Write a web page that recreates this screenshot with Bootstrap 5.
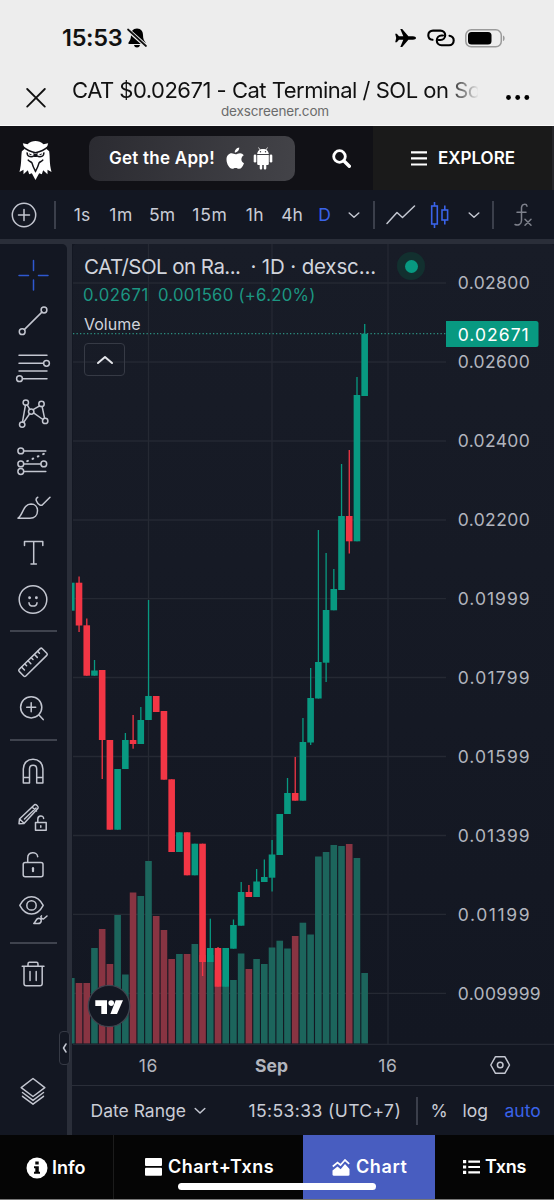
<!DOCTYPE html>
<html lang="en">
<head>
<meta charset="utf-8">
<meta name="viewport" content="width=device-width, initial-scale=1">
<title>CAT/SOL chart</title>
<link href="https://cdn.jsdelivr.net/npm/bootstrap@5.3.0/dist/css/bootstrap.min.css" rel="stylesheet">
<style>
body{font-family:Inter,"Liberation Sans",sans-serif;background:#131722;color:#c9ccd6;width:554px;height:1200px;overflow:hidden;line-height:1}
svg{display:block;flex:none}
.ln{fill:none;stroke:#c3c6d0;stroke-width:1.5;stroke-linecap:round;stroke-linejoin:round}
.t{white-space:nowrap;flex:none}
.browser{background:#ededed;color:#111;height:126px;border-bottom:1px solid #fafafa}
.status{height:76px;padding-left:62px}
.clock{font-size:23.5px;font-weight:600;letter-spacing:-.3px;width:64px}
.page-title{font-size:22px;letter-spacing:-.5px;width:406px;line-height:28px;-webkit-mask-image:linear-gradient(90deg,#000 376px,transparent 407px);mask-image:linear-gradient(90deg,#000 376px,transparent 407px)}
.host{font-size:13.5px;color:#6b6b6b;line-height:14px;letter-spacing:-.15px}
.top{height:64px;background:#111116;color:#fff}
.app-btn{width:206px;height:45px;border-radius:10px;background:linear-gradient(100deg,#2b2b31,#434348);font-weight:600;font-size:17px;letter-spacing:.25px;padding-left:20px;margin-left:37px}
.explore{background:#1a1a1a;width:181px;height:64px;font-weight:600;font-size:17px;padding-left:38px;border-right:2px solid #26262a}
.tools{height:49px;font-size:17.5px}
.tools>*{display:flex;justify-content:center;align-items:center;flex:none}
.sep{width:2px;height:28px;background:#3b3f4b}
.blue{color:#3a63e8}
.work{height:896px;background:#2a2e39;padding-top:5px}
.side{width:67px;background:#131722;border-top-right-radius:5px;padding:8px 1px 0 0}
.rule{width:47px;height:2px;background:#3f434e;margin:7px 0 7px}
.rule.low{margin:8.5px 0 6.5px}
.main{width:482px;margin-left:5px;background:#131722}
.legend{position:absolute;left:12px;top:9px}
.l1{font-size:20.5px;height:28px;line-height:28px;color:#d1d4dc}
.l2{font-size:16.7px;height:28px;line-height:28px;color:#1c9682;margin-left:-1px}
.l3{font-size:16px;height:30px;line-height:30px;color:#d1d4dc}
.fold{width:41px;height:33px;border:1.5px solid #363a45;border-radius:4px;margin-top:4px}
.live{position:absolute;left:325px;top:8px;width:28px;height:28px;border-radius:50%;background:#12302f}
.live i{width:13px;height:13px;border-radius:50%;background:#089981}
.handle{position:absolute;left:59px;top:1031px;width:11px;height:34px;border:1px solid #363a45;border-radius:4px;background:#131722}
.range{height:50px;border-top:1px solid #2a2e39;font-size:17.5px;padding-left:19px}
.tabs{height:65px;background:#050505;color:#fff;font-weight:600;font-size:18px;border-bottom:1.5px solid #777}
.tabs>div{height:100%}
.on{background:#485dc0}
.home{position:absolute;left:178px;top:1183px;width:198px;height:7px;border-radius:4px;background:#fff}
</style>
</head>
<body class="position-relative m-0">
<header class="browser">
  <div class="status d-flex align-items-center">
    <span class="clock t">15:53</span>
    <svg width="22" height="22" viewBox="0 0 22 22"><path d="M11 1.500c4.200 0 6 3 6 6.500 0 4 1 5.500 2.500 7.500v1.500H2.500V15.500C4 13.500 5 12 5 8c0-3.500 1.800-6.500 6-6.500zM8 18h6c-.3 1.700-1.500 2.500-3 2.500S8.300 19.700 8 18z"/><path d="M2 3l18 16" stroke="#ededed" stroke-width="4"/><path d="M2 2.500l18 16.500" stroke="#111" stroke-width="1.700" stroke-linecap="round"/></svg>
    <svg class="ms-auto" width="23" height="20" viewBox="0 0 23 20"><path d="M22 10c0 1-1.500 1.700-3 1.700h-4.600L8.200 19H6.300l3-7.300H5L2.800 14.300H1.200L2.200 10l-1-4.300h1.600L5 8.300h4.300L6.300 1h1.900l6.200 7.300H19c1.500 0 3 .7 3 1.700z"/></svg>
    <svg style="margin-left:10px" width="28" height="18" viewBox="0 0 28 18" fill="none" stroke="#000" stroke-width="2.100" stroke-linecap="round"><path d="M5.500 10.800C3 10.500 1.300 8.600 1.300 6.200 1.300 3.400 3.300 1.600 6 1.600h7.500c2.800 0 4.700 2 4.700 4.600s-2 4.800-4.700 4.800h-2"/><path d="M22.500 6.800c2.600.5 4.200 2.300 4.200 4.700 0 2.800-2 4.700-4.700 4.700h-7.500c-2.800 0-4.700-2-4.700-4.700S11.800 6.500 14.500 6.500H16"/></svg>
    <svg style="margin:0 48px 0 10px" width="41" height="19" viewBox="0 0 41 19"><rect x=".8" y=".8" width="35.500" height="17" rx="5.500" fill="none" stroke="#9b9b9b" stroke-width="1.500"/><rect x="3" y="3" width="23.500" height="12.600" rx="3.500"/><path d="M38 6.500c2.200.8 2.200 4.800 0 5.600z" fill="#9b9b9b"/></svg>
  </div>
  <div class="d-flex">
    <svg style="margin:12px 0 0 26px" width="20" height="20" viewBox="0 0 20 20"><path d="M1.200 1l17.600 17.600M18.800 1L1.200 18.600" stroke="#111" stroke-width="1.800" stroke-linecap="round"/></svg>
    <div style="margin-left:26px">
      <div class="page-title t">CAT $0.02671 - Cat Terminal / SOL on So</div>
      <div class="host text-center">dexscreener.com</div>
    </div>
    <svg style="margin:18px 0 0 27px" width="26" height="8"><circle cx="3.500" cy="3.500" r="2.400"/><circle cx="12.700" cy="3.500" r="2.400"/><circle cx="21.800" cy="3.500" r="2.400"/></svg>
  </div>
</header>

<nav class="top d-flex align-items-center">
  <svg style="margin:5px 0 0 19px" width="33" height="39" viewBox="0 0 96 117"><path fill="#fff" d="M10 7l14 3C38-3 58-3 72 10l14-3-5 17 8 7c3 20 0 34 7 62l-12-7v14L71 88l-4 12-8-3-11 20-11-20-8 3-4-12-13 12V86L0 93c7-28 4-42 7-62l8-7z"/><path fill="none" stroke="#111116" stroke-width="4.500" d="M10 17c12 11 26 16 38 18 12-2 26-7 38-18M23 34c-1 12 10 17 22 10M73 34c1 12-10 17-22 10M25 56c4 6 9 6 12 9 2 7 5 16 11 26 6-10 9-19 11-26 3-3 8-3 12-9"/><path fill="#111116" d="M41 36l7 3 7-3-3 12h-8zM29 37l9 5-7 1zM67 37l-9 5 7 1z"/></svg>
  <div class="app-btn d-flex align-items-center">
    <span class="t" style="width:117px">Get the App!</span>
    <svg width="19" height="23" viewBox="0 0 19 23" fill="#fff"><path d="M13.200.5c.2 2.400-1.800 5-4.400 5C8.500 3.200 10.800.8 13.200.5zM18 16.200c-1.200 3-2.700 5.600-4.900 5.600-1.300 0-1.900-.8-3.500-.8s-2.200.8-3.400.8C3.500 21.800.5 17 .5 12.500.5 8.600 3 6.300 5.600 6.300c1.600 0 2.700 1 4 1 1.200 0 2.500-1.100 4.500-1.100 1.400 0 2.800.7 3.700 2-3.500 2-2.900 6.700.2 8z"/></svg>
    <svg style="margin-left:8px" width="20" height="23" viewBox="0 0 20 23" fill="#fff"><path d="M4.200 7C4.400 3.800 6.800 1.900 10 1.900S15.600 3.800 15.800 7zM4.200 8h11.600v8.800c0 .8-.6 1.200-1.300 1.200h-1.200v3.200c0 1.800-2.500 1.800-2.500 0V18H9.200v3.200c0 1.800-2.500 1.800-2.500 0V18H5.500c-.7 0-1.300-.4-1.300-1.200z"/><rect x=".7" y="7.500" width="2.600" height="8" rx="1.300"/><rect x="16.700" y="7.500" width="2.600" height="8" rx="1.300"/><path d="M5.500.5l1.800 2.800M14.500.5l-1.800 2.800" stroke="#fff" stroke-width=".8"/><circle cx="7.500" cy="4.800" r=".7" fill="#37373c"/><circle cx="12.500" cy="4.800" r=".7" fill="#37373c"/></svg>
  </div>
  <svg style="margin-left:37px" width="19" height="19" viewBox="0 0 19 19" fill="none" stroke="#fff"><circle cx="7.500" cy="7.500" r="5.800" stroke-width="2.800"/><path d="M12 12l5.300 5.300" stroke-width="3.400" stroke-linecap="round"/></svg>
  <div class="explore ms-auto d-flex align-items-center">
    <svg width="16" height="15" viewBox="0 0 16 15"><path d="M0 1.300h16M0 7.400h16M0 13.500h16" stroke="#fff" stroke-width="2.200"/></svg>
    <span class="t" style="margin-left:11px">EXPLORE</span>
  </div>
</nav>

<div class="tools d-flex align-items-center">
  <div style="width:48px"><svg width="26" height="26" viewBox="-13 -13 26 26" class="ln"><circle r="11.700"/><path d="M-5.500 0h11M0-5.500v11"/></svg></div>
  <div style="width:14px"><i class="sep"></i></div>
  <div class="t" style="width:40px"><span>1s</span></div>
  <div class="t" style="width:38px;letter-spacing:.5px"><span>1m</span></div>
  <div class="t" style="width:44px"><span>5m</span></div>
  <div class="t" style="width:52px;letter-spacing:.8px"><span>15m</span></div>
  <div class="t" style="width:38px;letter-spacing:.6px"><span>1h</span></div>
  <div class="t" style="width:36px"><span>4h</span></div>
  <div class="t blue" style="width:29px"><span>D</span></div>
  <div style="width:30px"><svg width="12" height="8" viewBox="0 0 12 8" class="ln"><path d="M1.200 2L6 6.200 10.800 2"/></svg></div>
  <div style="width:9px"><i class="sep"></i></div>
  <div style="width:46px"><svg width="30" height="20" viewBox="0 0 30 20" class="ln"><path d="M1 18.500l10-11 5.500 5L28.500 1"/></svg></div>
  <div style="width:32px"><svg width="20" height="26" viewBox="0 0 20 26" fill="none" stroke="#3a63e8" stroke-width="1.600"><path d="M4.500 0v4M4.500 22v4M14.800 3.500V8M14.800 18v4.500"/><rect x="1.700" y="4" width="5.600" height="18"/><rect x="12" y="8" width="5.600" height="10"/></svg></div>
  <div style="width:36px"><svg width="12" height="8" viewBox="0 0 12 8" class="ln"><path d="M1.200 2L6 6.200 10.800 2"/></svg></div>
  <div style="width:2px"><i class="sep"></i></div>
  <div style="width:57px"><svg width="20" height="24" viewBox="0 0 20 24" class="ln" style="stroke:#7d808b"><path d="M14 3.200C13.500.6 9 .5 8.500 4.500v13c0 4-3.500 5.300-6.500 4M4 9.200h9M12 16.200l6 6M18 16.200l-6 6"/></svg></div>
</div>

<div class="work d-flex">
  <aside class="side d-flex flex-column align-items-center">
    <svg width="46" height="46.400" viewBox="-23 -23 46 46.400" class="ln" style="stroke:#2f58d0"><path d="M.5-14.500v10M.5 5v10M-14 .5h9.500M5.500 .5H15"/></svg>
    <svg width="46" height="46.400" viewBox="-23 -23 46 46.400" class="ln"><circle cx="-10.800" cy="10.700" r="2.900"/><circle cx="11" cy="-11" r="2.900"/><path d="M-8.700 8.600L8.900-8.900"/></svg>
    <svg width="46" height="46.400" viewBox="-23 -23 46 46.400" class="ln"><path d="M-14-12.700h28M-14-4.700h24.500M-14 3h28M-10.500 10.700H14"/><circle cx="13.500" cy="-4.700" r="2.900"/><circle cx="-13.500" cy="10.700" r="2.900"/></svg>
    <svg width="46" height="46.400" viewBox="-23 -23 46 46.400" class="ln"><circle cx="-7.200" cy="-11.400" r="2.700"/><circle cx="8.500" cy="-10.100" r="2.700"/><circle cx="-1.800" cy="-2.400" r="2.700"/><circle cx="-10.800" cy="10.600" r="2.700"/><circle cx="12.200" cy="6.900" r="2.700"/><path d="M-7.600-8.700l-2.900 16.600M-5.800-9.100l2.600 4.400M-3.400-.2l-5.900 8.600M.1-4.300l6.500-3.900M9.100-7.500l2.500 11.800M.6-1.200l9.300 6.700"/></svg>
    <svg width="46" height="46.400" viewBox="-23 -23 46 46.400" class="ln"><circle cx="-12.200" cy="-10.100" r="2.900"/><circle cx="-12.200" cy="2.900" r="2.900"/><circle cx="10.800" cy="2.900" r="2.900"/><circle cx="-12.200" cy="10.500" r="2.900"/><path d="M-9-10.100h21.800M-9 2.900H7.700M-9 10.500h21.800"/><path d="M-5.800.2L11-7.200" stroke-dasharray=".8 5" stroke-width="2"/></svg>
    <svg width="46" height="46.400" viewBox="-23 -23 46 46.400" class="ln"><path d="M-15 11.200c5-3 5-14 13-14.200 4 0 6.500 3 6.500 6.800 0 4.500-3 7.400-7.500 7.400zM4.800-9.800C1.500-8.500 3.500-4 7-1.800h2L17-9.800"/></svg>
    <svg width="46" height="46.400" viewBox="-23 -23 46 46.400" class="ln"><path d="M-8.500-7.500v-4H9.800v4M.7-11.500v22.500M-2 11h5.400"/></svg>
    <svg width="46" height="46.400" viewBox="-23 -23 46 46.400" class="ln"><circle cy="-.5" r="13.800"/><path d="M-4 2.800c.5 4.400 7.500 4.400 8 0"/><circle cx="-3.400" cy="-2.200" r=".7"/><circle cx="3.400" cy="-2.200" r=".7"/></svg>
    <div class="rule"></div>
    <svg width="46" height="46.400" viewBox="-23 -23 46 46.400" class="ln"><g transform="translate(0 .3) rotate(-44.500)"><rect x="-16.200" y="-4.700" width="32.400" height="9.400" rx="1.500"/><path d="M-11.500-4.500V-.5M-7-4.500v2.500M-2.500-4.500V-.5M2-4.500v2.500M6.500-4.500V-.5M11-4.500v2.500"/></g></svg>
    <svg width="46" height="46.400" viewBox="-23 -23 46 46.400" class="ln"><circle cx="-1.800" cy="-1.700" r="10.600"/><path d="M-6.300-1.700h9M-1.800-6.200v9M6 6l4.200 4.600"/></svg>
    <div class="rule"></div>
    <svg width="46" height="46.400" viewBox="-23 -23 46 46.400" class="ln"><path d="M-9.700 12V-2C-9.700-8-5.500-11.700 0-11.700S9.900-8 9.900-2v14H3.700V-2c0-5-7.200-5-7.200 0v14zM-9.700 6.500h6M3.700 6.500h6"/></svg>
    <svg width="46" height="46.400" viewBox="-23 -23 46 46.400" class="ln"><path d="M-14 6.800l.5-4.800L1.500-12.300c1.200-1 4.500 2 3.500 3.500L-9 6.500zM-13.300 2L-9 6.300M-8.500 2L3-9M-1-10l4.500 4M2.500 5.600h10.700v7.600H2.500zM4.800 5.400V2.200c0-4.300 5.800-4.300 5.800-.7M7.800 8.800v1.400"/></svg>
    <svg width="46" height="46.400" viewBox="-23 -23 46 46.400" class="ln"><rect x="-9.800" y="-1.600" width="19.800" height="14.400" rx="2"/><path d="M-5.300-1.800v-4c0-6.800 9.300-7 10-1.500"/><path d="M0 4.200v3" stroke-width="2.200"/></svg>
    <svg width="46" height="46.400" viewBox="-23 -23 46 46.400" class="ln"><path d="M-13.200-4.600c6-11.500 17.400-11.500 23.400 0-6 11.500-17.400 11.500-23.400 0z"/><circle cx="-1.500" cy="-4.600" r="4.700"/><path d="M.8 13.500c2-1 1.800-5.300 5-5.300 3.700.5 3 5.300-.7 5.300zM8.500 5.800c-1.500 1 0 3.200 2 3.200l3.500-3"/></svg>
    <div class="rule low"></div>
    <svg width="46" height="46.400" viewBox="-23 -23 46 46.400" class="ln"><path d="M-10.800-6.700h21.800M-5-7v-2c0-1 .5-1.700 1.500-1.700h7C4.500-10.700 5-10 5-9v2M-9-6.500v17c0 1.500.8 2.300 2.200 2.300H7c1.400 0 2.200-.8 2.200-2.300v-17M-3-1.500v9M3.200-1.500v9"/></svg>
    <svg width="46" height="46" style="margin:auto 0 21px" viewBox="-23 -23 46 46" class="ln"><path d="M0-12.500L11.800-3.300 0 5.500-11.800-3.300zM-10.500 1.500L0 9.400l10.500-7.900M-10.500 5.300L0 13.200l10.500-7.900"/></svg>
  </aside>
  <main class="main">
    <div class="position-relative">
      <svg id="chart" width="482" height="841" viewBox="72 244 482 841" font-family="Inter" font-size="17.500"></svg>
      <div class="legend">
        <div class="l1 t"><span style="letter-spacing:-.55px">CAT/SOL on Ra...</span><span style="margin-left:10px;letter-spacing:-.15px">· 1D · dexsc...</span></div>
        <div class="l2 t"><span style="letter-spacing:.6px">0.02671</span><span style="margin-left:9px;letter-spacing:.27px">0.001560 (+6.20%)</span></div>
        <div class="l3 t">Volume</div>
        <div class="fold d-flex align-items-center justify-content-center"><svg width="18" height="10" viewBox="0 0 18 10" class="ln" style="stroke-width:2;stroke:#e3e5ea"><path d="M2 8l7-6 7 6"/></svg></div>
      </div>
      <div class="live d-flex align-items-center justify-content-center"><i></i></div>
    </div>
    <div class="range d-flex align-items-center">
      <span class="t" style="width:103px;margin-left:-.5px">Date Range</span>
      <svg width="12" height="8" viewBox="0 0 12 8" class="ln"><path d="M1.200 1.500L6 6l4.800-4.500"/></svg>
      <span class="t" style="width:167px;margin-left:43px;letter-spacing:.4px">15:53:33 (UTC+7)</span>
      <i class="sep"></i>
      <span class="t" style="width:32px;margin-left:13px">%</span>
      <span class="t" style="width:42px">log</span>
      <span class="t blue">auto</span>
    </div>
  </main>
</div>
<div class="handle d-flex align-items-center justify-content-center"><svg width="5" height="10" viewBox="0 0 5 10" class="ln"><path d="M4 1L1.500 5 4 9"/></svg></div>

<footer class="tabs d-flex">
  <div class="d-flex align-items-center" style="width:114px;border-right:1px solid #1c1c1c;padding:2px 0 0 26px">
    <svg width="22" height="22" viewBox="0 0 22 22"><circle cx="11" cy="11" r="10.500" fill="#fff"/><path d="M9.300 4.500h3.400v3H9.300zM8 9.200h4.800v5.500H14v2.100H8v-2.100h1.300v-3.400H8z" fill="#050505"/></svg>
    <span class="t" style="margin-left:4px">Info</span>
  </div>
  <div class="d-flex align-items-center" style="width:189px;padding-left:31px">
    <svg width="17" height="18" viewBox="0 0 17 18" fill="#fff"><rect width="17" height="8" rx="1"/><rect y="9.800" width="17" height="8" rx="1"/></svg>
    <span class="t" style="margin-left:6px;letter-spacing:.5px">Chart+Txns</span>
  </div>
  <div class="on d-flex align-items-center" style="width:132px;padding-left:29px">
    <svg width="18" height="17" viewBox="0 0 18 17"><path d="M.8 7.500L5.500 3.500l3 2.500L13 1l4.200 3.800" fill="none" stroke="#fff" stroke-width="1.700"/><path d="M.5 11.500l5-4 3.200 2.700L13 5l4.500 5v5.500c0 .8-.5 1.200-1.200 1.200H1.700c-.8 0-1.200-.5-1.200-1.200z" fill="#fff"/></svg>
    <span class="t" style="margin-left:6px;letter-spacing:.6px">Chart</span>
  </div>
  <div class="d-flex align-items-center" style="width:119px;padding-left:28px">
    <svg width="17" height="14" viewBox="0 0 17 14" fill="#fff"><path d="M0 0h3.200v3.200H0zM0 5.400h3.200v3.200H0zM0 10.800h3.200V14H0zM5.300.5H17v2.200H5.300zM5.300 5.900H17v2.200H5.300zM5.300 11.300H17v2.200H5.300z"/></svg>
    <span class="t" style="margin-left:5px;letter-spacing:-.3px">Txns</span>
  </div>
</footer>
<div class="home"></div>

<script>
// Daily candles: direction, body top, body bottom, high, low, volume top.
// Index 10 is the "16" gridline, index 26 is "Sep".
const bars = [
 ['u',582.7,610.7,582.7,610.7,978],['d',582.7,625.5,576.5,632,983],['d',625.3,675.7,618.5,675.7,983],['u',670.5,675.7,660,675.7,948],
 ['d',670,740,670,779,929],['d',740,829.7,740,829.7,964],['u',769,829.7,769,829.7,915],['u',740,769,733,769,974.5],
 ['d',740,744,715,748.7,892.5],['u',720,744,707,744,896],['u',696,720,600,720,861],['d',696,712,696,712,916],
 ['d',711,779.7,711,779.7,930],['d',779.3,852,779.3,852,959],['u',832.3,852,832.3,852,954],['d',832.3,875.3,832.3,875.3,954],
 ['u',843.7,875.3,843.7,875.3,944],['d',843.7,962,843.7,976,955],['u',948,962,918.7,962,955],['d',948,986.7,947,986.7,970],
 ['u',948,986.7,948,986.7,980],['u',925,948.7,919.5,948.7,980],['u',892,925.7,882,925.7,953.5],['d',892,897,885,897,969],
 ['u',881.5,897,869,897,959],['u',877,882,859.5,882,964],['u',854.5,877.7,840,891.5,947.5],['u',814,855,814,855,940.7],
 ['u',793,814,778,814,948.5],['d',793,800.7,757,800.7,936],['u',742,800.7,718,800.7,922.7],['u',698,742.5,668,745,934.5],
 ['u',662,698.5,530,698.5,856.5],['u',610,662.7,553,682,852],['u',589,610.3,569,610.3,845],['u',516,590,464,590,846],
 ['d',516,541.3,450,553.5,844],['u',395,541.3,377,541.3,858],['u',333.7,396,324,396,973]];
const green = '#089981', red = '#f23645';
let s = `<defs><linearGradient id="bg" x1="0" y1="0" x2="0" y2="1"><stop offset="0" stop-color="#181c27"/><stop offset="1" stop-color="#131722"/></linearGradient><clipPath id="pane"><rect x="72" y="244" width="375" height="800"/></clipPath></defs>
<rect x="72" y="244" width="482" height="841" fill="#131722"/><rect x="73" y="244" width="481" height="800" rx="4" fill="url(#bg)"/>`;
const ticks = [['0.02800',283],['0.02600',362],['0.02400',441],['0.02200',520],['0.01999',598.7],['0.01799',677.5],['0.01599',756.5],['0.01399',835.5],['0.01199',914.3],['0.009999',993.3]];
for (const [, y] of ticks) s += `<path d="M73 ${y}H446" stroke="#252933" stroke-width="1.300"/>`;
for (const x of [148.5, 272, 388]) s += `<path d="M${x} 244V1044" stroke="#252933" stroke-width="1.300"/>`;
s += '<g clip-path="url(#pane)">';
bars.forEach((b, i) => { const x = 71.3 + i * 7.72; s += `<rect x="${x-3.3}" y="${b[5]}" width="6.600" height="${1043.5-b[5]}" fill="${b[0]=='u'?'#1c655c':'#883442'}"/>`; });
bars.forEach((b, i) => { const x = 71.3 + i * 7.72, c = b[0]=='u'?green:red; s += `<rect x="${x-.6}" y="${b[3]}" width="1.300" height="${b[4]-b[3]}" fill="${c}"/><rect x="${x-3.3}" y="${b[1]}" width="6.600" height="${b[2]-b[1]}" fill="${c}"/>`; });
s += '</g><path d="M73 333.700H446" stroke="#2b8f80" stroke-width="1.200" stroke-dasharray="1.300 2.200"/><path d="M73 1044.300H554" stroke="#2a2e39"/>';
for (const [t, y] of ticks) s += `<text x="457.700" y="${y+6.3}" fill="#b2b5be" textLength="${t.length>7?83:72}">${t}</text>`;
s += `<path d="M446 321h90a2.500 2.500 0 0 1 2.500 2.500v21a2.500 2.500 0 0 1-2.500 2.500h-90z" fill="#089981"/><text x="457.700" y="340.500" fill="#fff" textLength="71">0.02671</text>`;
s += `<g fill="#b2b5be" text-anchor="middle"><text x="148.500" y="1071.500" letter-spacing=".8">16</text><text x="271.500" y="1071.500" font-weight="700">Sep</text><text x="388" y="1071.500" letter-spacing=".8">16</text></g>`;
s += `<path class="ln" d="M495.500 1056.700h9.300l4.700 8.300-4.700 8.300h-9.300l-4.700-8.300z"/><circle class="ln" cx="500.200" cy="1065" r="2.800"/>`;
s += `<circle cx="109" cy="1006" r="20.700" fill="#131722" stroke="#40434e" stroke-width="1.300"/><path fill="#fff" d="M95.300 1000.300H107V1014h-5.700v-8h-6zM115.700 1000.300h7.300l-6 13.700h-6.600z"/><circle cx="111.200" cy="1003.100" r="2.800" fill="#fff"/>`;
document.getElementById('chart').innerHTML = s;
</script>
<script src="https://cdn.jsdelivr.net/npm/bootstrap@5.3.0/dist/js/bootstrap.bundle.min.js"></script>
</body>
</html>
